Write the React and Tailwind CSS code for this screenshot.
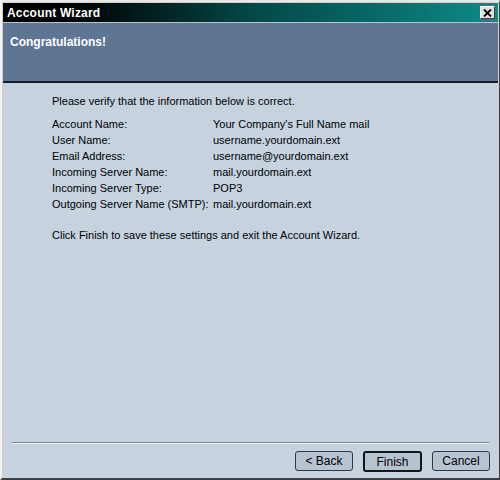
export default function App() {
  const rows = [
    ["Account Name:", "Your Company's Full Name mail"],
    ["User Name:", "username.yourdomain.ext"],
    ["Email Address:", "username@yourdomain.ext"],
    ["Incoming Server Name:", "mail.yourdomain.ext"],
    ["Incoming Server Type:", "POP3"],
    ["Outgoing Server Name (SMTP):", "mail.yourdomain.ext"],
  ];
  return (
    <div
      className="w-[500px] h-[480px] bg-[#d4d0c8] border-t-2 border-l-2 border-t-[#e8e8e8] border-l-[#f4f4f4] border-r border-b-2 border-r-[#404040] border-b-[#404040] flex flex-col text-[11px] text-black"
      style={{ fontFamily: '"Liberation Sans", Arial, sans-serif' }}
    >
      <div className="mx-[1px] mt-[1px] h-[19px] flex items-center justify-between pl-[4px] pr-[3px] bg-gradient-to-r from-[#000000] via-[#044848] to-[#0d8b87]">
        <span className="text-white font-bold text-[12px] tracking-[0.2px] pt-[1px]">Account Wizard</span>
        <div className="w-[15px] h-[13px] bg-[#e2e0dc] border border-t-white border-l-white border-r-[#404040] border-b-[#404040] flex items-center justify-center">
          <svg width="9" height="8" viewBox="0 0 9 8">
            <path d="M1 0.5 L8 7.5 M8 0.5 L1 7.5" stroke="#000" strokeWidth="1.8" />
          </svg>
        </div>
      </div>
      <div className="flex-1 flex flex-col bg-[#c6d3df] mx-[1px] border-t border-t-[#b8c4cf]">
        <div className="h-[60px] bg-[#5e7593] border-b-2 border-b-[#141c28] px-[7px] pt-[10px]">
          <span className="text-white font-bold text-[12px]">Congratulations!</span>
        </div>
        <div className="flex-1 pl-[49px] pt-[10px]">
          <div className="h-[16px] leading-[16px]">Please verify that the information below is correct.</div>
          <div className="mt-[7px] flex flex-col">
            {rows.map(([k, v]) => (
              <div key={k} className="flex h-[16px] leading-[16px]">
                <span className="w-[161px]">{k}</span>
                <span>{v}</span>
              </div>
            ))}
          </div>
          <div className="mt-[15px] h-[16px] leading-[16px]">
            Click Finish to save these settings and exit the Account Wizard.
          </div>
        </div>
        <div className="mx-[9px] h-[2px] border-t border-t-[#7d8a96] border-b border-b-[#eef2f6]"></div>
        <div className="h-[34px] flex items-center justify-end pr-[8px] gap-[10px]">
          <button className="w-[58px] h-[20px] rounded-[3px] bg-[#b7c3d0] border border-[#303840] text-[12px]">&lt; Back</button>
          <button className="w-[59px] h-[21px] rounded-[3px] bg-[#b7c3d0] border-2 border-[#10161c] text-[12px]">Finish</button>
          <button className="w-[58px] h-[20px] rounded-[3px] bg-[#b7c3d0] border border-[#303840] text-[12px]">Cancel</button>
        </div>
      </div>
    </div>
  );
}
